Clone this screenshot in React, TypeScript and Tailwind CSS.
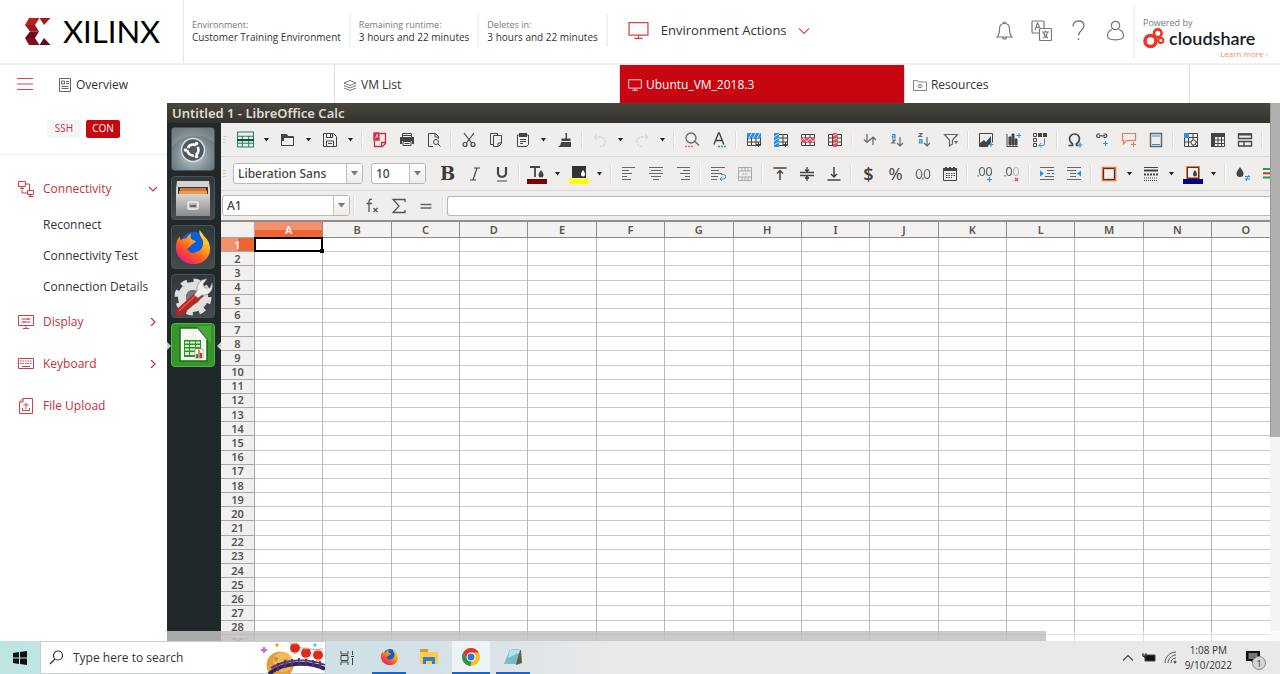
import type { ReactNode } from "react";
import clsx from "clsx";

const COLUMNS = ["A", "B", "C", "D", "E", "F", "G", "H", "I", "J", "K", "L", "M", "N", "O"];
const ROWS = Array.from({ length: 29 }, (_, i) => i + 1);

const DARK = "#444444";
const BLUE = "#2492e8";

function Svg({ size = 16, box = 16, color = DARK, width = 1, children }: { size?: number; box?: number; color?: string; width?: number; children: ReactNode }) {
  return (
    <svg width={size} height={size} viewBox={`0 0 ${box} ${box}`} fill="none" stroke={color} strokeWidth={width} aria-hidden="true" className="shrink-0">
      {children}
    </svg>
  );
}

function Tool({ label, children }: { label: string; children: ReactNode }) {
  return (
    <button type="button" aria-label={label} className="flex h-6 w-[27px] shrink-0 items-center justify-center">
      {children}
    </button>
  );
}

function Caret({ label }: { label: string }) {
  return (
    <button type="button" aria-label={label} className="flex h-6 w-[15px] shrink-0 items-center justify-center">
      <svg width="5" height="4" viewBox="0 0 5 4" aria-hidden="true"><path d="M0 0h5L2.5 3.5z" fill="#222" /></svg>
    </button>
  );
}

function Sep() {
  return <span className="mx-[3px] h-[18px] w-0.5 shrink-0 border-r border-white bg-[#dedcda]" />;
}

function Grip() {
  return (
    <span className="mr-1.5 ml-[2px] flex w-[3px] shrink-0 flex-col gap-0.5">
      <span className="h-px bg-[#cfcdcb]" />
      <span className="h-px bg-[#cfcdcb]" />
      <span className="h-px bg-[#cfcdcb]" />
    </span>
  );
}

function XilinxMark() {
  return (
    <svg width="26" height="27" viewBox="0 0 26 27" aria-hidden="true" className="shrink-0">
      <path d="M4 0h10.500L10 7H0z" fill="#b0241d" />
      <path d="M0 7h10l4 6.500H5z" fill="#9c1a1d" />
      <path d="M5 13.500h9L10 20H0z" fill="#6a0a1e" />
      <path d="M0 20h10l4.500 7H4z" fill="#7c1021" />
      <path d="M14.500 0h11L19 7z" fill="#a31a1c" />
      <path d="M14.500 27h11L19 20z" fill="#640a1e" />
    </svg>
  );
}

function Monitor({ size = 20, color = "#d8454b" }: { size?: number; color?: string }) {
  return (
    <Svg size={size} box={20} color={color} width={1.2}>
      <path d="M1 2.5h18v12H1zM10 14.5v3M6 17.5h8" />
    </Svg>
  );
}

function Info({ label, value }: { label: string; value: string }) {
  return (
    <div className="flex h-[33px] flex-col justify-center border-r-2 border-[#f0f0f0] px-2 leading-[13px] whitespace-nowrap">
      <span className="text-[9px] text-[#777]">{label}</span>
      <span className="text-[10px] text-[#333]">{value}</span>
    </div>
  );
}

function Header() {
  return (
    <header className="flex h-[65px] shrink-0 items-center border-b-2 border-[#f2f2f2] bg-white">
      <a href="#home" className="flex h-full w-[184px] shrink-0 items-center gap-3 border-r border-[#e6e6e6] pl-[25px]">
        <XilinxMark />
        <span className="font-[Lato,sans-serif] text-[31px] leading-none text-black">XILINX</span>
      </a>
      <div className="flex min-w-0 flex-1 items-center pb-0.5">
        <Info label="Environment:" value="Customer Training Environment" />
        <Info label="Remaining runtime:" value="3 hours and 22 minutes" />
        <Info label="Deletes in:" value="3 hours and 22 minutes" />
        <button type="button" className="ml-5 flex items-center gap-3 text-[13px] whitespace-nowrap text-[#333]">
          <Monitor size={21} />
          Environment Actions
          <Svg size={10} box={10} color="#d8454b" width={1.2}><path d="M0 2.5l5 5 5-5" /></Svg>
        </button>
        <div className="ml-auto flex items-center gap-4">
          <button type="button" aria-label="Notifications">
            <Svg size={21} box={21} color="#777" width={1.2}>
              <path d="M3 17c2-2 2.500-4 2.500-8 0-3.500 2-5.500 5-5.500s5 2 5 5.500c0 4 .5 6 2.500 8zM9 3.500a1.500 1.500 0 0 1 3 0M8.500 17a2 2 0 0 0 4 0" />
            </Svg>
          </button>
          <button type="button" aria-label="Language">
            <Svg size={21} box={21} color="#777" width={1.2}>
              <rect x="1" y="1" width="12" height="12" rx="1" />
              <path d="M4 10l2.500-7L9 8M5 7.500h3" />
              <rect x="8.500" y="8.500" width="12" height="12" rx="1" fill="white" />
              <path d="M11 12h7M14.500 10.500V12M12 18c2.500-1 4-3 4.500-6M12.500 12.500c.5 2 2 4.500 4.500 5.500" />
            </Svg>
          </button>
          <button type="button" aria-label="Help">
            <Svg size={21} box={21} color="#777" width={1.3}>
              <path d="M5 6.500C5 3 7 1 10.500 1S16 3 16 6c0 4-5.500 4.500-5.500 9.500M10.500 18v2" />
            </Svg>
          </button>
          <button type="button" aria-label="Account">
            <Svg size={21} box={21} color="#777" width={1.2}>
              <circle cx="10.500" cy="5.500" r="4.200" />
              <path d="M7 9.500c-3 1-4.500 3.500-4.500 6.500 0 3 3 3.800 8 3.800s8-.8 8-3.800c0-3-1.500-5.500-4.500-6.500" />
            </Svg>
          </button>
        </div>
      </div>
      <div className="mr-3 ml-[7px] flex w-[135px] shrink-0 flex-col border-l-2 border-[#f0f0f0] pt-3 pl-2">
        <span className="text-[9px] leading-[10px] text-[#777]">Powered by</span>
        <span className="flex items-center gap-1">
          <svg width="22" height="21" viewBox="0 0 22 21" fill="none" stroke="#ee3524" aria-hidden="true" className="shrink-0">
            <circle cx="7.500" cy="13" r="5.500" strokeWidth="3.600" />
            <circle cx="14.800" cy="5.200" r="3.800" strokeWidth="2.600" />
            <circle cx="17.800" cy="12.300" r="2.600" strokeWidth="2" />
          </svg>
          <span className="font-[Lato,sans-serif] text-[18px] leading-4 font-semibold text-[#1a1a24]">cloudshare</span>
        </span>
        <a href="#learn" className="self-end text-[8px] leading-[9px] text-[#f58b5a]">Learn more ›</a>
      </div>
    </header>
  );
}

function Tab({ active, icon, children }: { active?: boolean; icon: ReactNode; children: ReactNode }) {
  return (
    <a
      href="#tab"
      className={clsx(
        "flex h-full flex-[285] items-center gap-1 border-r border-[#dcdcdc] pt-px pl-2 text-[12px] whitespace-nowrap",
        active ? "bg-[#c7060f] text-white" : "text-[#333]"
      )}
    >
      {icon}
      {children}
    </a>
  );
}

function Tabs() {
  return (
    <nav className="flex h-[38px] shrink-0 items-center bg-white shadow-sm">
      <button type="button" aria-label="Toggle menu" className="w-[50px] pl-[17px]">
        <Svg color="#d8454b"><path d="M0 2.500h16M0 8h16M0 13.500h16" /></Svg>
      </button>
      <Tab icon={
        <Svg size={14} box={14} color="#666"><path d="M1.500 .5h11v13h-11zM3.500 3h3v3h-3zM8 3.500h3M8 5.500h3M3.500 8.500h7M3.500 10.500h7" /></Svg>
      }>
        Overview
      </Tab>
      <Tab icon={
        <Svg size={14} box={14} color="#777"><path d="M7 2.500l6 2.500-6 2.500L1 5zM1 7.500L7 10l6-2.500M1 10l6 2.500 6-2.500" /></Svg>
      }>
        VM List
      </Tab>
      <Tab active icon={<Monitor size={14} color="#ffffff" />}>Ubuntu_VM_2018.3</Tab>
      <Tab icon={
        <Svg size={14} box={14} color="#888"><path d="M.5 12.500v-10h4l1 1.500h8v8.500zM4 8h6M5.500 6.500h3M5.500 9.500h3" /></Svg>
      }>
        Resources
      </Tab>
      <span className="flex-[93]" />
    </nav>
  );
}

function MenuItem({ icon, label, arrow }: { icon: ReactNode; label: string; arrow?: "down" | "right" }) {
  return (
    <a href={`#${label}`} className="flex h-6 items-center gap-2 text-[12px] text-[#c4303a]">
      {icon}
      <span className="flex-1">{label}</span>
      {arrow && (
        <Svg size={8} box={8} color="#c4303a" width={1.2}>
          <path d={arrow === "down" ? "M0 2l4 4 4-4" : "M2 0l4 4-4 4"} />
        </Svg>
      )}
    </a>
  );
}

function Sidebar() {
  const red = "#c9404a";
  return (
    <aside className="w-[167px] shrink-0 overflow-hidden bg-white">
      <div className="flex h-[52px] items-center justify-center gap-[5px] border-b border-[#eeeeee] text-[10px]">
        <button type="button" className="h-[18px] w-[34px] rounded-xs bg-[#f4f5f5] text-[#c9303a]">SSH</button>
        <button type="button" className="h-[18px] w-[34px] rounded-xs bg-[#c7060f] text-white">CON</button>
      </div>
      <nav className="flex flex-col pt-[22px] pr-2.5 pl-[17px]">
        <MenuItem label="Connectivity" arrow="down" icon={
          <Svg size={18} box={18} color={red}><path d="M1.500 1.500h7v5h-7zM5 6.500v2M3 8.500h4M10.500 10.500h6v4h-6zM13.500 14.500v2M11.500 16.500h5M8.500 4h4v6M5 10v3h5" /></Svg>
        } />
        <div className="flex flex-col py-2 pl-[26px] text-[12px] text-[#333]">
          <a href="#reconnect" className="py-[7px] leading-[17px]">Reconnect</a>
          <a href="#test" className="py-[7px] leading-[17px] whitespace-nowrap">Connectivity Test</a>
          <a href="#details" className="py-[7px] leading-[17px] whitespace-nowrap">Connection Details</a>
        </div>
        <div className="flex flex-col gap-[18px]">
          <MenuItem label="Display" arrow="right" icon={
            <Svg size={18} box={18} color={red}><path d="M1.500 2.500h15v10h-15zM9 12.500v3M6 15.500h6M4.500 6h9M4.500 9h9M11 5v2M7 8v2" /></Svg>
          } />
          <MenuItem label="Keyboard" arrow="right" icon={
            <Svg size={18} box={18} color={red}><path d="M1.500 3.500h15v10h-15zM5 11.500h8" /><path d="M3 6h12M3 8.500h12" strokeDasharray="1.500 1" /></Svg>
          } />
          <MenuItem label="File Upload" icon={
            <Svg size={18} box={18} color={red}><path d="M6 1.500h9.500v15h-13V5zM6 1.500V5H2.500M9 12V6.500M6.500 9L9 6.500 11.500 9M5.500 11v2.500h7V11" /></Svg>
          } />
        </div>
      </nav>
    </aside>
  );
}

function FirefoxIcon({ size }: { size: number }) {
  return (
    <svg width={size} height={size} viewBox="0 0 40 40" aria-hidden="true">
      <defs>
        <linearGradient id="fox" x1="0.9" y1="0" x2="0.2" y2="1">
          <stop offset="0" stopColor="#fff44f" />
          <stop offset="0.35" stopColor="#ffb01f" />
          <stop offset="0.65" stopColor="#ff5a1f" />
          <stop offset="1" stopColor="#e31587" />
        </linearGradient>
      </defs>
      <circle cx="21" cy="18" r="14" fill="#0a60d8" />
      <path d="M27 2c2 3 3 4 5 7 4 4 6 8 6 13 0 9-7 16-17 16S2 31 2 21c0-5 1-9 4-12l1 4c2-2 4-2 6-2 1-3 3-4 5-5-1 3-1 4 1 6l4 2c-1 2-3 2-5 4 0 2-3 2-4 4 2 5 7 5 10 3 5-1 8-7 6-13-2-3-4-6-3-10z" fill="url(#fox)" />
    </svg>
  );
}

function LauncherButton({ label, active, children }: { label: string; active?: boolean; children: ReactNode }) {
  return (
    <button
      type="button"
      aria-label={label}
      className={clsx(
        "relative flex size-11 items-center justify-center rounded-sm border",
        active ? "border-[#4cb848] bg-[#35952b]" : "border-[#4b5356] bg-linear-to-b from-[#30383b] to-[#454b4e]"
      )}
    >
      {children}
      {active && <span className="absolute top-[18px] -left-[5px] border-y-4 border-l-4 border-y-transparent border-l-[#ccc]" />}
      {active && <span className="absolute top-[18px] -right-[7px] border-y-4 border-r-4 border-y-transparent border-r-[#ccc]" />}
    </button>
  );
}

function Launcher() {
  return (
    <div className="flex w-[54px] shrink-0 flex-col items-start gap-[5px] overflow-hidden bg-[#20282a] pt-1 pl-1">
      <LauncherButton label="Search your computer">
        <svg width="42" height="42" viewBox="0 0 42 42" aria-hidden="true">
          <defs>
            <radialGradient id="dash" cx=".5" cy=".65" r=".7"><stop offset="0" stopColor="#c8d0d4" /><stop offset=".6" stopColor="#7d8b92" /><stop offset="1" stopColor="#59676e" /></radialGradient>
          </defs>
          <rect width="42" height="42" rx="3" fill="url(#dash)" />
          <path d="M0 19C9 7 31 3 42 15V0H0z" fill="#fff" fillOpacity=".14" />
          <circle cx="21" cy="22" r="11.500" fill="#4e5a60" stroke="#d8dde0" strokeWidth="1.500" />
          <circle cx="21" cy="22" r="5.500" fill="none" stroke="white" strokeWidth="2.500" strokeDasharray="9.500 2" strokeDashoffset="4" />
          <circle cx="13.500" cy="22" r="1.800" fill="white" />
          <circle cx="24.500" cy="15.500" r="1.800" fill="white" />
          <circle cx="24.500" cy="28.500" r="1.800" fill="white" />
        </svg>
      </LauncherButton>
      <LauncherButton label="Files">
        <svg width="38" height="40" viewBox="0 0 38 40" aria-hidden="true">
          <defs><linearGradient id="cab" x1="0" y1="0" x2="0" y2="1"><stop offset="0" stopColor="#d6d6d6" /><stop offset="1" stopColor="#8a8a8a" /></linearGradient></defs>
          <path d="M3 3h32l1 8v27H2V11z" fill="#d3d3d3" />
          <path d="M4 9h30v10H4z" fill="#4c3020" />
          <path d="M6 10h26v3H6z" fill="#c9763c" />
          <path d="M5 13h28v5H5z" fill="#ee9a52" />
          <path d="M2 16h34v22H2z" fill="url(#cab)" />
          <rect x="14" y="24" width="10" height="7" rx="1" fill="#b8b8b8" stroke="#eee" strokeWidth="1.500" />
          <path d="M16 27h6v2h-6z" fill="#666" />
        </svg>
      </LauncherButton>
      <LauncherButton label="Firefox"><FirefoxIcon size={38} /></LauncherButton>
      <LauncherButton label="System Settings">
        <svg width="40" height="40" viewBox="0 0 40 40" aria-hidden="true">
          <circle cx="20" cy="21" r="16" fill="none" stroke="#dedede" strokeWidth="5" strokeDasharray="6.300 6.270" />
          <circle cx="20" cy="21" r="11" fill="none" stroke="#e0e0e0" strokeWidth="8" />
          <circle cx="20" cy="21" r="7" fill="#777" />
          <path d="M25 14l6 6L9 39c-4 2-8-1-6-5z" fill="#b52822" />
          <path d="M24 18L6 35" stroke="#dc5a50" strokeWidth="1.500" />
          <path d="M24 15c-1-6 3-12 10-12l-4 5 2 4h5l2-5c2 8-4 13-10 12l-4 3-4-3z" fill="#eeeeee" stroke="#8a8a8a" strokeWidth=".7" />
        </svg>
      </LauncherButton>
      <LauncherButton label="LibreOffice Calc" active>
        <svg width="40" height="40" viewBox="0 0 40 40" aria-hidden="true">
          <path d="M24 1h14v18z" fill="#4aa83a" />
          <path d="M7 3h17l10 12v21H7z" fill="#f4f6f2" stroke="#1c6a18" strokeWidth="1.500" />
          <path d="M24 3v12h10z" fill="#fff" />
          <path d="M11 15h17v17H11z" fill="#2f9128" />
          <path d="M12 16.500h4v2h-4zM17 16.500h5v2h-5zM23 16.500h4v2h-4zM12 20h4v2h-4zM17 20h5v2h-5zM23 20h4v2h-4zM12 23.500h4v2h-4zM17 23.500h5v2h-5zM12 27h4v3h-4zM17 27h5v3h-5z" fill="#d7f3cf" />
          <path d="M22 24h8v9h-8z" fill="#fff" stroke="#999" strokeWidth=".7" />
          <path d="M23 29h2v4h-2z" fill="#2878bd" /><path d="M25 25h2v8h-2z" fill="#eb8b20" /><path d="M27 28h2v5h-2z" fill="#c33c28" />
        </svg>
      </LauncherButton>
    </div>
  );
}

const GRID = "M1.500 2.500h13v11h-13zM1.500 6h13M1.500 10h13M5.500 2.500v11M10 2.500v11";

function StandardBar() {
  return (
    <div className="flex h-[34px] items-center overflow-hidden border-b border-[#dad8d6]" role="toolbar" aria-label="Standard">
      <Grip />
      <Tool label="New"><Svg size={17} color="#1e8463"><path d="M.5 1h15v14H.5zM.5 5h15M5 5v10M11 5v10M.5 11.500h15" /><path d="M0 8.500h16" stroke="#14513e" strokeWidth="2" /></Svg></Tool>
      <Caret label="New options" />
      <Tool label="Open"><Svg><path d="M1.500 2.500h5l1 2h6v9h-12z" /><path d="M1 2h6l1 3h6v1H4v3H1z" fill={DARK} stroke="none" /></Svg></Tool>
      <Caret label="Open options" />
      <Tool label="Save"><Svg><path d="M1.500 1.500h10l3 3v10h-13zM4.500 1.500v4h6v-4M4.500 14v-5h7v5M8.500 2v3M6 11.500h4" /></Svg></Tool>
      <Caret label="Save options" />
      <Sep />
      <Tool label="Export as PDF"><Svg color="#d02b45" width={1.3}><path d="M8 1.500h5.500v10l-3 3h-8V9M13 10.500h-3.500V14" /><path d="M2 1h5v7H2z" fill="#d02b45" /><path d="M3.500 6.500l1.500-4 1 3" stroke="white" strokeWidth=".8" /></Svg></Tool>
      <Tool label="Print"><Svg><path d="M3.500 5V1.500h9V5M4 3.500h8" /><path d="M1 5h14v7h-2V9H3v3H1z" fill={DARK} stroke="none" /><path d="M4 9.500h8v4H4zM5.500 11.500h5" /></Svg></Tool>
      <Tool label="Print Preview"><Svg><path d="M7 14.500H2.500v-13h7l3 3V7M9 1.500v3.500h3.500" /><circle cx="10" cy="10" r="2.500" /><path d="M12 12l2.500 2.500" /></Svg></Tool>
      <Sep />
      <Tool label="Cut"><Svg width={1.2}><path d="M3 1l7.500 10M13 1L5.500 11" /><circle cx="4" cy="12.500" r="2" /><circle cx="12" cy="12.500" r="2" /></Svg></Tool>
      <Tool label="Copy"><Svg><path d="M5 12.500H2.500v-11h7V3M5.500 3.500h8v8l-3 3h-5zM13.500 11h-3.500v3.500" /></Svg></Tool>
      <Tool label="Paste"><Svg><path d="M2.500 3v11.500h9l2-2V3z" /><path d="M4 1h8v4H4z" fill={DARK} stroke="none" /><path d="M5 7.500h6M5 9.500h6M5 11.500h3" /></Svg></Tool>
      <Caret label="Paste options" />
      <Tool label="Clone Formatting"><Svg><path d="M8.500 1h1.500v5.500h3.500V9h-9V6.500h4z" fill={DARK} stroke="none" /><path d="M4 10h10v5H1c2-1 3-3 3-5z" fill={DARK} stroke="none" /></Svg></Tool>
      <Sep />
      <Tool label="Undo"><Svg color="#cccccc"><path d="M5 2L2 5l3 3M2.500 5H8a5 4.500 0 0 1 0 9.500" strokeDasharray="3 .8" /></Svg></Tool>
      <Caret label="Undo options" />
      <Tool label="Redo"><Svg color="#cccccc"><path d="M11 2l3 3-3 3M13.500 5H8a5 4.500 0 0 0 0 9.500" strokeDasharray="3 .8" /></Svg></Tool>
      <Caret label="Redo options" />
      <Sep />
      <Tool label="Find and Replace"><Svg color="#666" width={1.3}><circle cx="7" cy="6" r="5" /><path d="M11 9.500l4 4" /><path d="M1 14.500h8" stroke="#f06a4a" strokeWidth="1.500" strokeDasharray="2 1" /></Svg></Tool>
      <Tool label="Spelling"><Svg width={1.4}><path d="M3 12.500L7.500 1h.8l4.500 11.500M5 8.500h6" /><path d="M7 14.500h8" stroke="#31a860" strokeWidth="1.500" strokeDasharray="2 1" /></Svg></Tool>
      <Sep />
      <Tool label="Insert Rows"><Svg><path d={GRID} /><path d="M1 1h14v5H1z" fill={BLUE} stroke="none" /><path d="M3 6l3-5M7 6l3-5M11 6l3-5" stroke="#bfe0f8" /><path d="M12.500 10v5M10 12.500h5" /></Svg></Tool>
      <Tool label="Insert Columns"><Svg><path d={GRID} /><path d="M1 1h5v14H1z" fill={BLUE} stroke="none" /><path d="M1 5l5-3M1 9l5-3M1 13l5-3" stroke="#bfe0f8" /><path d="M12.500 10v5M10 12.500h5" /></Svg></Tool>
      <Tool label="Delete Rows"><Svg><path d={GRID} /><path d="M1 6h14v4H1z" fill="#ef4a5e" stroke="none" /><path d="M1 9l3-3 3 4 3-4 3 4 2-3" stroke="#ffd0d6" /></Svg></Tool>
      <Tool label="Delete Columns"><Svg><path d={GRID} /><path d="M6 1h4v14H6z" fill="#ef4a5e" stroke="none" /><path d="M6 4l4-2M6 8l4-2M6 12l4-2" stroke="#ffd0d6" /></Svg></Tool>
      <Sep />
      <Tool label="Sort"><Svg color="#666" width={1.2}><path d="M5 2v8M2 7.500l3 3 3-3M11 13V5M8 8l3-3 3 3" /></Svg></Tool>
      <Tool label="Sort Ascending"><Svg color="#666" width={1.2}><path d="M11 5v9M8 11l3 3 3-3" /><path d="M3 2.500h3V6H3.500V4H6" stroke={BLUE} /><path d="M3 8h3l-3 3h3.500" /></Svg></Tool>
      <Tool label="Sort Descending"><Svg color="#666" width={1.2}><path d="M11 5v9M8 11l3 3 3-3" /><path d="M3 1.500h3l-3 3h3.500" /><path d="M3 7.500h3V11H3.500V9H6" stroke={BLUE} /></Svg></Tool>
      <Tool label="AutoFilter"><Svg color="#666" width={1.2}><path d="M1.500 2.500h13L9.500 8v4l-3 2V8z" /><path d="M11 9h4l-2 3z" fill="#666" stroke="none" /></Svg></Tool>
      <Sep />
      <Tool label="Insert Image"><Svg><path d="M1.500 1.500h13v9M10 14.500H1.500v-13" /><path d="M2 14V11l4-3 2 2 5-6v7l-3 3z" fill={DARK} stroke="none" /><path d="M13 10v5M10.500 12.500h5" stroke={BLUE} /></Svg></Tool>
      <Tool label="Insert Chart"><Svg><path d="M2 2v12.500h11" /><path d="M4 5h2v8H4zM7 2h2v11H7zM10 7h2v6h-2z" fill={DARK} /><path d="M14 1v5M11.500 3.500h5" stroke={BLUE} /></Svg></Tool>
      <Tool label="Pivot Table"><Svg><path d="M1.500 1.500h3v3h-3zM1.500 6.500h3v3h-3zM1.500 11.500h3v3h-3z" /><path d="M6 1h4v4H6zM11 1h4v4h-4z" fill={DARK} stroke="none" /><path d="M12.500 6.500v5a2 2 0 0 1-2 2H7M9 11l-2 2.500L9 15.500" stroke={BLUE} /></Svg></Tool>
      <Sep />
      <Tool label="Special Character"><Svg width={1.7}><path d="M1.500 13.500h4v-1.500C3.500 10.500 2.500 9 2.500 7a5 5 0 0 1 10 0c0 2-1 3.500-3 5v1.500h2" /><path d="M13 10.500v5M10.500 13h5" stroke={BLUE} strokeWidth="1.200" /></Svg></Tool>
      <Tool label="Hyperlink"><Svg><path d="M6 2H4a1.800 1.800 0 0 0 0 3.500H6M9.500 2h2a1.800 1.800 0 0 1 0 3.500h-2M5 3.800h6" strokeWidth="1.200" /><path d="M11.500 9v5M9 11.500h5" stroke={BLUE} /></Svg></Tool>
      <Tool label="Comment"><Svg color="#f07a58" width={1.2}><path d="M1.500 1.500h13v7h-9L2.500 12V8.500h-1zM12.500 10v5M10 12.500h5" /></Svg></Tool>
      <Tool label="Headers and Footers"><Svg color="#666"><path d="M2.500 1.500h11v13h-11z" strokeWidth="1.500" /><path d="M4 4h8M4 12.500h8" stroke={BLUE} /></Svg></Tool>
      <Sep />
      <Tool label="Define Print Area"><Svg><path d="M1.500 1.500h13v13h-13zM1.500 5.500h13M1.500 10h13M5.500 1.500v13M10 1.500v13" /><path d="M1 1h5v5H1z" fill={BLUE} stroke="none" /><circle cx="10.500" cy="10.500" r="2.500" fill="#efeeed" /><path d="M12.500 12.500l2.500 2.500" /></Svg></Tool>
      <Tool label="Freeze Rows and Columns"><Svg><path d="M1.500 1.500h13v13h-13zM1.500 8h13M1.500 11.500h13M8 4v10.500M11.500 4v10.500" /><path d="M1 1h14v4H5v10H1z" fill={DARK} stroke="none" /></Svg></Tool>
      <Tool label="Split Window"><Svg width={1.3}><path d="M1.500 2h13v4.500h-13zM1.500 9.500h13V14h-13zM7 9.500V14" /><path d="M1 1.500h14v2H1z" fill={DARK} stroke="none" /></Svg></Tool>
      <Sep />
    </div>
  );
}

const comboClass = "block h-full w-full appearance-none rounded-[3px] border border-[#bbb8b4] bg-white pl-1 text-[12px] font-medium text-[#444] outline-none";

function ComboArrow() {
  return (
    <span className="pointer-events-none absolute inset-y-px right-px flex w-4 items-center justify-center rounded-r-xs border-l border-[#c4c1bd] bg-linear-to-b from-white to-[#ecebea]">
      <svg width="7" height="5" viewBox="0 0 7 5" aria-hidden="true"><path d="M0 0h7L3.500 4.500z" fill="#777" /></svg>
    </span>
  );
}

function FormattingBar() {
  return (
    <div className="flex h-[34px] items-center overflow-hidden border-b border-[#dad8d6]" role="toolbar" aria-label="Formatting">
      <Grip />
      <label className="relative ml-px h-[21px] w-[130px] shrink-0">
        <select aria-label="Font Name" className={comboClass}><option>Liberation Sans</option></select>
        <ComboArrow />
      </label>
      <label className="relative mr-2 ml-2 h-[21px] w-[55px] shrink-0">
        <select aria-label="Font Size" className={comboClass}><option>10</option></select>
        <ComboArrow />
      </label>
      <Tool label="Bold"><span className="font-['DejaVu_Serif',serif] text-[18px] leading-none font-bold text-[#3c3c3c]">B</span></Tool>
      <Tool label="Italic"><Svg width={1.2}><path d="M7 2h6M3 14h6M10 2L6 14" /></Svg></Tool>
      <Tool label="Underline"><Svg width={2.2}><path d="M4 1v6c0 5 8 5 8 0V1" /><path d="M3 15h10" strokeWidth="1" /></Svg></Tool>
      <Sep />
      <Tool label="Font Color"><Svg size={20} box={20}><path d="M3 3h10M8 3v10" strokeWidth="1.800" /><path d="M14 6c1.500 2 2.500 3.500 2.500 5a2.500 2.500 0 0 1-5 0c0-1.500 1-3 2.500-5z" fill={DARK} stroke="none" /><path d="M0 15h20v5H0z" fill="#780000" stroke="none" /></Svg></Tool>
      <Caret label="Font color options" />
      <Tool label="Highlighting"><Svg size={20} box={20}><path d="M3 2h14v12H3z" fill="#333" stroke="none" /><path d="M14 6c1.500 2 2 3 2 4.500a2 2 0 0 1-4 0c0-1.500.5-2.500 2-4.500z" fill="#fff" stroke="none" /><path d="M0 15h20v5H0z" fill="#ffff00" stroke="none" /></Svg></Tool>
      <Caret label="Highlighting options" />
      <Sep />
      <Tool label="Align Left"><Svg color="#666"><path d="M1 1.500h13M1 4.500h7M1 7.500h10M1 10.500h5M1 13.500h9" /></Svg></Tool>
      <Tool label="Center"><Svg color="#666"><path d="M1 1.500h14M3 4.500h10M1 7.500h14M3 10.500h10M5 13.500h6" /></Svg></Tool>
      <Tool label="Align Right"><Svg color="#666"><path d="M2 1.500h13M8 4.500h7M5 7.500h10M10 10.500h5M6 13.500h9" /></Svg></Tool>
      <Sep />
      <Tool label="Wrap Text"><Svg color="#666"><path d="M1 1.500h14M1 4.500h8M1 7.500h11M1 10.500h7M1 13.500h6" /><path d="M11 8.500h2.500a2 2 0 0 1 0 4.500H10M12 11l-2 2 2 2" stroke={BLUE} /></Svg></Tool>
      <Tool label="Merge Cells"><Svg color="#aaaaaa"><path d="M1.500 1.500h13v13h-13z" /><path d="M1.500 5h13M1.500 11h13M5 1.500V5M8 1.500V5M11 1.500V5M5 11v3.500M8 11v3.500M11 11v3.500" /><path d="M5 8h6" strokeDasharray="2 1" /></Svg></Tool>
      <Sep />
      <Tool label="Align Top"><Svg width={1.5}><path d="M1.500 2h13M8 14V5M5 7.500L8 4.500l3 3" /></Svg></Tool>
      <Tool label="Center Vertically"><Svg width={1.3}><path d="M1 6.500h14M1 9.500h14M8 1v5M6 3.500l2 2 2-2M8 15v-5M6 12.500l2-2 2 2" /></Svg></Tool>
      <Tool label="Align Bottom"><Svg width={1.5}><path d="M1.500 14h13M8 1v10M5 8l3 3 3-3" /></Svg></Tool>
      <Sep />
      <Tool label="Format as Currency"><span className="text-[18px] leading-none font-semibold text-[#444]">$</span></Tool>
      <Tool label="Format as Percent"><span className="text-[17px] leading-none text-[#444]">%</span></Tool>
      <Tool label="Format as Number"><Svg color="#666" width={1.2}><ellipse cx="4" cy="8" rx="2.700" ry="4.500" /><ellipse cx="12" cy="8" rx="2.700" ry="4.500" /><path d="M8 11.500v2" /></Svg></Tool>
      <Tool label="Format as Date"><Svg><path d="M1.500 3v11.500h13V3" /><path d="M1 2h2V1h2v1h2V1h2v1h2V1h2v1h2v3H1z" fill={DARK} stroke="none" /><path d="M4 7.500h9M4 9.500h9M4 11.500h6" strokeDasharray="1.500 1" /></Svg></Tool>
      <Sep />
      <Tool label="Add Decimal Place"><Svg color="#666" width={1.2}><path d="M1 9v1.500M12.500 11v5M10 13.500h5" stroke={BLUE} /><ellipse cx="5" cy="5.500" rx="2.500" ry="4" /><ellipse cx="12" cy="5.500" rx="2.500" ry="4" /></Svg></Tool>
      <Tool label="Delete Decimal Place"><Svg color="#666" width={1.2}><path d="M1 9v1.500" /><ellipse cx="5" cy="5.500" rx="2.500" ry="4" /><ellipse cx="12" cy="5.500" rx="2.500" ry="4" stroke="#bbb" /><path d="M11 12l3 3M14 12l-3 3" stroke="#e04a5a" /></Svg></Tool>
      <Sep />
      <Tool label="Increase Indent"><Svg color="#666"><path d="M1 1.500h14M8 4.500h7M8 7.500h3M13 7.500h2M6 10.500h9M1 13.500h14" /><path d="M1 4.500l4 3-4 3z" fill={BLUE} stroke="none" /></Svg></Tool>
      <Tool label="Decrease Indent"><Svg color="#666"><path d="M1 1.500h14M1 4.500h9M4 7.500h6M4 10.500h6M1 13.500h14" /><path d="M15 4.500l-4 3 4 3z" fill={BLUE} stroke="none" /></Svg></Tool>
      <Sep />
      <Tool label="Borders"><Svg><path d="M2 2h12v12H2z" stroke="#e07a40" strokeWidth="2.500" /><path d="M2.500 2.500h11v11h-11z" stroke="#553020" /></Svg></Tool>
      <Caret label="Borders options" />
      <Tool label="Border Style"><Svg><path d="M1 1.500h14" /><path d="M1 4.500h14" strokeWidth="2" /><path d="M1 8.500h14" strokeDasharray="2 1" strokeWidth="2" /><path d="M1 12h14M1 14.500h14" strokeDasharray="1 1" /></Svg></Tool>
      <Caret label="Border style options" />
      <Tool label="Border Color"><Svg size={20} box={20}><path d="M4 3h12v11H4z" stroke="#e07a40" strokeWidth="2" /><path d="M4.500 3.500h11v11h-11z" stroke="#553020" /><path d="M12 6c1.500 2 2 3 2 4.500a2 2 0 0 1-4 0c0-1.500.5-2.500 2-4.500z" fill={DARK} stroke="none" /><path d="M0 15h20v5H0z" fill="#000080" stroke="none" /></Svg></Tool>
      <Caret label="Border color options" />
      <Sep />
      <Tool label="Conditional Formatting"><Svg><path d="M5 1c2 3 3.500 4.500 3.500 6.500a3.500 3.500 0 0 1-7 0C1.500 5.500 3 4 5 1z" fill={DARK} stroke="none" /><path d="M10 10.500h5M10 13h5M11 15l3-6" stroke={BLUE} /></Svg></Tool>
      <Tool label="Styles"><Svg width={2}><path d="M1 3h14M1 11.500h8" stroke="#1ea05a" /><path d="M1 7.300h14" stroke="#d22b3c" /></Svg></Tool>
    </div>
  );
}

function FormulaBar() {
  return (
    <div className="flex h-[31px] items-center border-b-2 border-[#8f8d8b] pl-px">
      <label className="relative h-[21px] w-[128px] shrink-0">
        <input aria-label="Name Box" defaultValue="A1" className={comboClass} />
        <ComboArrow />
      </label>
      <Sep />
      <Tool label="Function Wizard">
        <Svg color="#555"><path d="M8 1.500C5.500.5 5 2.500 5 4v10M2.500 5.500H8" strokeWidth="1.300" /><path d="M9.500 10l4 4M13.500 10l-4 4" strokeWidth="1.300" /></Svg>
      </Tool>
      <Tool label="Select Function"><Svg color="#555"><path d="M14 4V1.500H2L8 8l-6 6.500h12V12" strokeWidth="1.300" /></Svg></Tool>
      <Tool label="Formula"><Svg color="#666" width={1.3}><path d="M2.500 6.500h11M2.500 10h11" /></Svg></Tool>
      <Sep />
      <input aria-label="Input line" className="h-5 min-w-0 flex-1 rounded-l-[3px] border border-r-0 border-[#bbb8b4] bg-white px-1 text-[12px] outline-none" />
    </div>
  );
}

function Sheet() {
  return (
    <div className="min-h-0 flex-1 overflow-hidden">
      <table className="h-[102%] w-[101%] table-fixed border-separate border-spacing-0 text-center text-[11px] leading-[12px]">
        <thead>
          <tr className="h-4">
            <td className="w-[34px] border-r border-b border-[#aaa8a6] bg-[#f1f0ef]" />
            {COLUMNS.map((c) => (
              <th
                key={c}
                scope="col"
                className={clsx(
                  "border-r border-b border-[#8e8c8a] p-0 font-semibold",
                  c === "A" ? "bg-linear-to-b from-[#f4906c] from-50% to-[#ee6432] to-50% text-white" : "bg-[#f3f2f1] text-[#555]"
                )}
              >
                {c}
              </th>
            ))}
          </tr>
        </thead>
        <tbody>
          {ROWS.map((r) => (
            <tr key={r} className="h-[14px]">
              <th
                scope="row"
                className={clsx(
                  "border-r border-b border-[#aaa8a6] p-0 font-semibold",
                  r === 1 ? "bg-linear-to-r from-[#f4906c] from-50% to-[#ee6432] to-50% text-white" : "bg-[#f1f0ef] text-[#555]"
                )}
              >
                {r}
              </th>
              {COLUMNS.map((c) => {
                const selected = r === 1 && c === "A";
                return (
                  <td
                    key={c}
                    className={clsx("border-r border-b border-r-[#b8b8b8] border-b-[#c9c9c9] bg-white p-0", selected && "relative z-10")}
                  >
                    {selected && (
                      <span className="absolute -inset-px border-2 border-black">
                        <span className="absolute -right-[3px] -bottom-[3px] size-1 bg-black" />
                      </span>
                    )}
                  </td>
                );
              })}
            </tr>
          ))}
        </tbody>
      </table>
    </div>
  );
}

function Desktop() {
  return (
    <main className="relative flex min-w-0 flex-1 overflow-hidden">
      <div className="flex min-w-0 flex-1 flex-col">
        <div className="h-5 shrink-0 bg-linear-to-b from-[#48473f] to-[#33322d] pl-[5px] font-['Noto_Sans',sans-serif] text-[13px] leading-5 font-semibold text-[#dfdbd2]">
          Untitled 1 - LibreOffice Calc
        </div>
        <div className="flex min-h-0 flex-1">
          <Launcher />
          <div className="flex min-w-0 flex-1 flex-col bg-[#efeeed] font-['Noto_Sans',sans-serif]">
            <StandardBar />
            <FormattingBar />
            <FormulaBar />
            <Sheet />
          </div>
        </div>
      </div>
      <div className="w-2.5 shrink-0 bg-[#f4f4f4]">
        <div className="h-[62%] border-l border-[#999] bg-[#b0b0b0]" />
      </div>
      <div className="absolute inset-x-0 bottom-0 h-2.5 bg-white/50">
        <div className="h-full w-[79%] bg-[#b4b4b4]/70" />
      </div>
    </main>
  );
}

function TaskbarApp({ label, running, active, children }: { label: string; running?: boolean; active?: boolean; children: ReactNode }) {
  return (
    <button
      type="button"
      aria-label={label}
      className={clsx("flex h-full items-center justify-center border-b-2", active ? "w-[38px] bg-[#eef3f8]" : "w-[34px]", running || active ? "border-[#1667c9]" : "border-transparent")}
    >
      {children}
    </button>
  );
}

function Taskbar() {
  return (
    <footer className="flex h-[33px] shrink-0 items-center bg-linear-to-r from-[#bde5e3] via-[#d3e0e8] via-33% to-[#e9e9e9] to-48%">
      <button type="button" aria-label="Start" className="flex h-full w-10 shrink-0 items-center justify-center">
        <svg width="14" height="14" viewBox="0 0 14 14" aria-hidden="true"><path d="M0 2l6-.9v5.500H0zM7 1l7-1v6.600H7zM0 7.500h6V13l-6-.9zM7 7.500h7V14l-7-1z" fill="#111" /></svg>
      </button>
      <label className="flex h-full w-[286px] shrink-0 items-center border border-[#c5cfd2] bg-white pl-2">
        <Svg size={15} box={15} color="#333" width={1.2}><circle cx="9" cy="5.500" r="4.500" /><path d="M6 9L1 14" /></Svg>
        <input aria-label="Search" placeholder="Type here to search" className="min-w-0 flex-1 pl-[9px] text-[12px] outline-none placeholder:text-[#333]" />
        <svg width="66" height="32" viewBox="0 0 66 32" fill="none" aria-hidden="true">
          <path d="M5 5v6M2 8h6" stroke="#d260ed" strokeWidth="2" />
          <circle cx="18" cy="3" r="1.700" fill="#f5a400" />
          <circle cx="56" cy="3" r="1.700" fill="#4acde0" />
          <circle cx="21" cy="23" r="13.500" fill="#e0a040" />
          <circle cx="24" cy="20" r="10" fill="#efba5e" />
          <circle cx="17" cy="17" r="2" fill="#d18f32" /><circle cx="27" cy="19" r="2.500" fill="#d99a3c" /><circle cx="15" cy="25" r="2.500" fill="#c98429" />
          <path d="M30 0c10 7 20 8 34 7" stroke="#aaa" />
          <circle cx="36" cy="6" r="5" fill="#e02a20" /><circle cx="47" cy="11" r="5" fill="#e02a20" /><circle cx="59" cy="13" r="5" fill="#e02a20" />
          <path d="M34 1.500h4M34 11h4M45 6.500h4M45 16h4M57 8.500h4M57 18h4" stroke="#f3a52b" strokeWidth="1.500" />
          <path d="M10 32c13-12 40-13 56-5" stroke="#35245c" strokeWidth="4" />
          <path d="M12 26c14-9 38-10 54-3M19 21v8M26 18v8M33 17v7M40 16v7M47 17v7M54 18v7M61 19v7" stroke="#51367f" strokeWidth="1.800" />
        </svg>
      </label>
      <button type="button" aria-label="Task View" className="flex h-full w-[41px] items-center justify-center">
        <Svg color="#444"><path d="M2 1v3h7V1M2 15v-3h7v3M2 5.500h7v5H2zM13.500 1v4M13.500 8v7M12 6.500h3" /></Svg>
      </button>
      <div className="flex h-full items-center gap-1.5 pl-[5px]">
        <TaskbarApp label="Firefox" running><FirefoxIcon size={19} /></TaskbarApp>
        <TaskbarApp label="File Explorer">
          <svg width="20" height="18" viewBox="0 0 20 18" aria-hidden="true"><path d="M1 2h7l2 2h9v12H1z" fill="#ffcb4c" /><path d="M1 1h8v3H1z" fill="#dc9b20" /><path d="M4 9h12v7h-3v-3H7v3H4z" fill="#2d83cb" /></svg>
        </TaskbarApp>
        <TaskbarApp label="Chrome" active>
          <svg width="20" height="20" viewBox="0 0 20 20" aria-hidden="true">
            <circle cx="10" cy="10" r="9" fill="#fbc116" />
            <path d="M10 1a9 9 0 0 1 7.800 4.500H10L6 12.500 2.200 5.500A9 9 0 0 1 10 1z" fill="#db3a2c" />
            <path d="M2.200 5.500L6 12.300l4.500 1.700L9.500 19A9 9 0 0 1 2.200 5.500z" fill="#249747" />
            <circle cx="10" cy="10" r="4.500" fill="#fff" /><circle cx="10" cy="10" r="3.500" fill="#2875e8" />
          </svg>
        </TaskbarApp>
        <TaskbarApp label="Notepad" running>
          <svg width="20" height="18" viewBox="0 0 20 18" aria-hidden="true"><path d="M8 1l10 1 1 13-6 2z" fill="#685b43" /><path d="M7 1l10 1-4 14H1z" fill="#77bccb" /><path d="M7 1l10 1-1 3-7 3-4 2z" fill="#b9e3eb" /></svg>
        </TaskbarApp>
      </div>
      <div className="ml-auto flex h-full items-center gap-2 text-[#333]">
        <button type="button" aria-label="Show hidden icons"><Svg size={12} box={12} width={1.2}><path d="M1 8.500l5-5 5 5" /></Svg></button>
        <svg width="14" height="10" viewBox="0 0 14 10" aria-hidden="true"><path d="M3 2h10v6H3z" fill="#111" stroke="#444" /><path d="M0 2h4M1 0v3.500h3V0M2.500 3v2" stroke="#333" fill="none" /></svg>
        <Svg size={13} box={13} color="#555"><path d="M1 12C1 6 6 1 12 1M4 12c0-4 4-8 8-8M7 12c0-3 2-5 5-5" /><circle cx="11" cy="11" r="1" fill="#333" /></Svg>
        <div className="text-center text-[10px] leading-[15px]"><div>1:08 PM</div><div>9/10/2022</div></div>
        <button type="button" aria-label="Notifications" className="relative mr-3 ml-1 flex h-full w-6 items-center justify-center">
          <svg width="15" height="15" viewBox="0 0 15 15" aria-hidden="true" className="mr-1.5"><path d="M0 1h14v10H8v3l-3-3H0z" fill="#111" /><path d="M2.500 4h9M2.500 6h9M2.500 8h6" stroke="#ddd" /></svg>
          <span className="absolute right-0.5 bottom-1 flex size-[14px] items-center justify-center rounded-full border border-[#888] bg-[#d4d4d4] text-[9px] leading-none">1</span>
        </button>
      </div>
    </footer>
  );
}

export default function App() {
  return (
    <div className="flex h-screen flex-col overflow-hidden bg-white font-['Open_Sans',sans-serif]">
      <Header />
      <Tabs />
      <div className="flex min-h-0 flex-1">
        <Sidebar />
        <Desktop />
      </div>
      <Taskbar />
    </div>
  );
}
